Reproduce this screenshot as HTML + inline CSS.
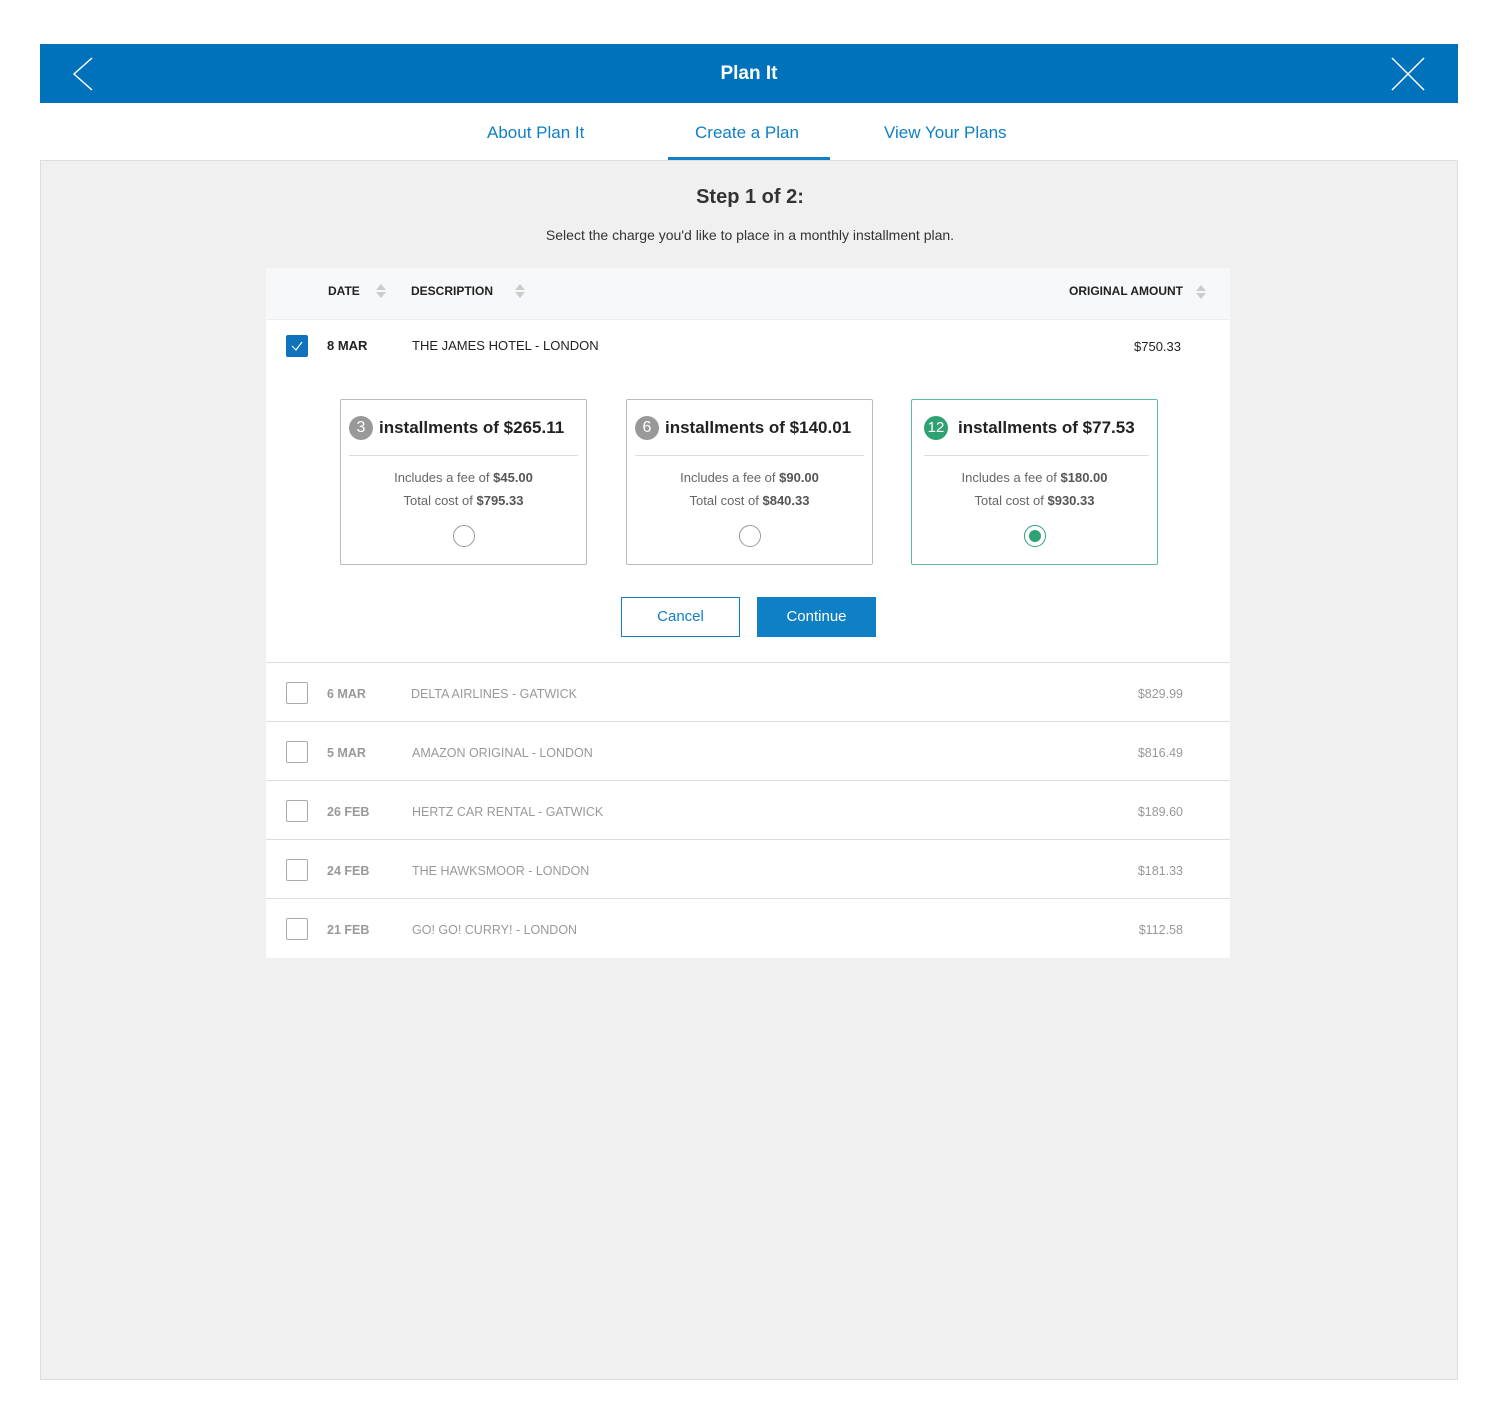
<!DOCTYPE html>
<html><head><style>
*{box-sizing:border-box;margin:0;padding:0}
body{width:1500px;height:1422px;background:#fff;font-family:"Liberation Sans",sans-serif;position:relative;overflow:hidden}
.abs{position:absolute}
.frame{left:40px;top:44px;width:1418px;height:1336px;background:#f0f0f0;border:1px solid #ddd}
.hdr{left:40px;top:44px;width:1418px;height:59px;background:#0072bc;color:#fff;font-weight:bold;font-size:19px;text-align:center;line-height:59px}
.tabs{left:40px;top:103px;width:1418px;height:58px;background:#fff;border-bottom:1px solid #ddd}
.tab{position:absolute;top:20px;color:#0f7fc6;font-size:17px}
.panel{left:266px;top:268px;width:964px;height:690px;background:#fff}
.th{font-size:12px;font-weight:bold;color:#222;top:284px}
.sort{width:0;height:0;border-left:5px solid transparent;border-right:5px solid transparent}
.row{left:266px;width:964px;height:59px;border-top:1px solid #ddd;color:#999;font-size:12.5px}
.row span{position:absolute;top:24px}
.cb{position:absolute;left:20px;top:19px;width:22px;height:22px;border:1px solid #aaa;border-radius:2px}
.card{top:399px;width:247px;height:166px;border:1px solid #bbb;border-radius:2px;background:#fff;text-align:center}
.card .t{position:absolute;top:16px;left:8px;right:8px;height:40px;border-bottom:1px solid #ddd;font-weight:bold;font-size:17px;color:#222;text-align:left;line-height:24px}
.num{display:inline-block;width:24px;height:24px;border-radius:50%;background:#999;color:#fff;font-weight:normal;font-size:16px;text-align:center;line-height:24px;margin-right:6px;vertical-align:top}
.card .d{position:absolute;top:66px;left:0;right:0;font-size:13px;color:#666;line-height:23px}
.card .d b{color:#555}
.rad{position:absolute;top:125px;left:112px;width:22px;height:22px;border:1px solid #999;border-radius:50%}
</style></head><body>
<div class="abs frame"></div>
<div class="abs hdr">Plan It</div>
<svg class="abs" style="left:70px;top:56px" width="26" height="36"><path d="M22 2 L4 18 L22 34" stroke="#fff" stroke-width="1.5" fill="none"/></svg>
<svg class="abs" style="left:1390px;top:56px" width="36" height="36"><path d="M2 2 L34 34 M34 2 L2 34" stroke="#fff" stroke-width="1.5"/></svg>
<div class="abs tabs">
<div class="tab" style="left:447px">About Plan It</div>
<div class="tab" style="left:655px">Create a Plan</div>
<div class="tab" style="left:844px">View Your Plans</div>
<div class="abs" style="left:628px;top:54px;width:162px;height:3px;background:#0f7fc6"></div>
</div>
<div class="abs" style="left:0;width:1500px;top:186px;text-align:center;font-weight:bold;font-size:20px;color:#333">Step 1 of 2:</div>
<div class="abs" style="left:0;width:1500px;top:227px;text-align:center;font-size:14px;color:#333">Select the charge you'd like to place in a monthly installment plan.</div>
<div class="abs panel"></div>
<div class="abs" style="left:266px;top:268px;width:964px;height:52px;background:#f7f8fa;border-bottom:1px solid #eee"></div>
<div class="abs th" style="left:328px">DATE</div>
<div class="abs th" style="left:411px">DESCRIPTION</div>
<div class="abs th" style="left:1069px">ORIGINAL AMOUNT</div>
<div class="abs sort" style="left:376px;top:284px;border-bottom:6px solid #ccc"></div><div class="abs sort" style="left:376px;top:292px;border-top:6px solid #ccc"></div>
<div class="abs sort" style="left:515px;top:284px;border-bottom:6px solid #ccc"></div><div class="abs sort" style="left:515px;top:292px;border-top:6px solid #ccc"></div>
<div class="abs sort" style="left:1196px;top:285px;border-bottom:6px solid #ccc"></div><div class="abs sort" style="left:1196px;top:293px;border-top:6px solid #ccc"></div>
<div class="abs" style="left:286px;top:335px;width:22px;height:22px;background:#0f72bc;border-radius:2px"></div>
<svg class="abs" style="left:286px;top:335px" width="22" height="22"><path d="M6 11 L10 15 L16 7" stroke="#fff" stroke-width="1.2" fill="none"/></svg>
<div class="abs" style="left:327px;top:338px;font-size:13px;font-weight:bold;color:#222">8 MAR</div>
<div class="abs" style="left:412px;top:338px;font-size:13px;color:#222">THE JAMES HOTEL - LONDON</div>
<div class="abs" style="left:1134px;top:339px;font-size:13px;color:#222">$750.33</div>
<div class="abs card" style="left:340px"><div class="t"><span class="num">3</span>installments of $265.11</div><div class="d">Includes a fee of <b>$45.00</b><br>Total cost of <b>$795.33</b></div><div class="rad"></div></div>
<div class="abs card" style="left:626px"><div class="t"><span class="num">6</span>installments of $140.01</div><div class="d">Includes a fee of <b>$90.00</b><br>Total cost of <b>$840.33</b></div><div class="rad"></div></div>
<div class="abs card" style="left:911px;border-color:#5cbf95"><div class="t" style="left:12px"><span class="num" style="background:#2fa172;font-size:15px;margin-right:10px">12</span>installments of $77.53</div><div class="d">Includes a fee of <b>$180.00</b><br>Total cost of <b>$930.33</b></div><div class="rad" style="border-color:#2fa172"><div style="position:absolute;left:4px;top:4px;width:12px;height:12px;border-radius:50%;background:#2fa172"></div></div></div>
<div class="abs" style="left:621px;top:597px;width:119px;height:40px;border:1px solid #0f7fc6;color:#0f7fc6;text-align:center;line-height:38px;font-size:15px">Cancel</div>
<div class="abs" style="left:757px;top:597px;width:119px;height:40px;background:#0f7fc6;color:#fff;text-align:center;line-height:40px;font-size:15px">Continue</div>
<div class="abs row" style="top:662px"><div class="cb"></div><span style="left:61px;font-weight:bold">6 MAR</span><span style="left:145px">DELTA AIRLINES - GATWICK</span><span style="right:47px">$829.99</span></div>
<div class="abs row" style="top:721px"><div class="cb"></div><span style="left:61px;font-weight:bold">5 MAR</span><span style="left:146px">AMAZON ORIGINAL - LONDON</span><span style="right:47px">$816.49</span></div>
<div class="abs row" style="top:780px"><div class="cb"></div><span style="left:61px;font-weight:bold">26 FEB</span><span style="left:146px">HERTZ CAR RENTAL - GATWICK</span><span style="right:47px">$189.60</span></div>
<div class="abs row" style="top:839px"><div class="cb"></div><span style="left:61px;font-weight:bold">24 FEB</span><span style="left:146px">THE HAWKSMOOR - LONDON</span><span style="right:47px">$181.33</span></div>
<div class="abs row" style="top:898px;height:60px"><div class="cb"></div><span style="left:61px;font-weight:bold">21 FEB</span><span style="left:146px">GO! GO! CURRY! - LONDON</span><span style="right:47px">$112.58</span></div>
</body></html>
